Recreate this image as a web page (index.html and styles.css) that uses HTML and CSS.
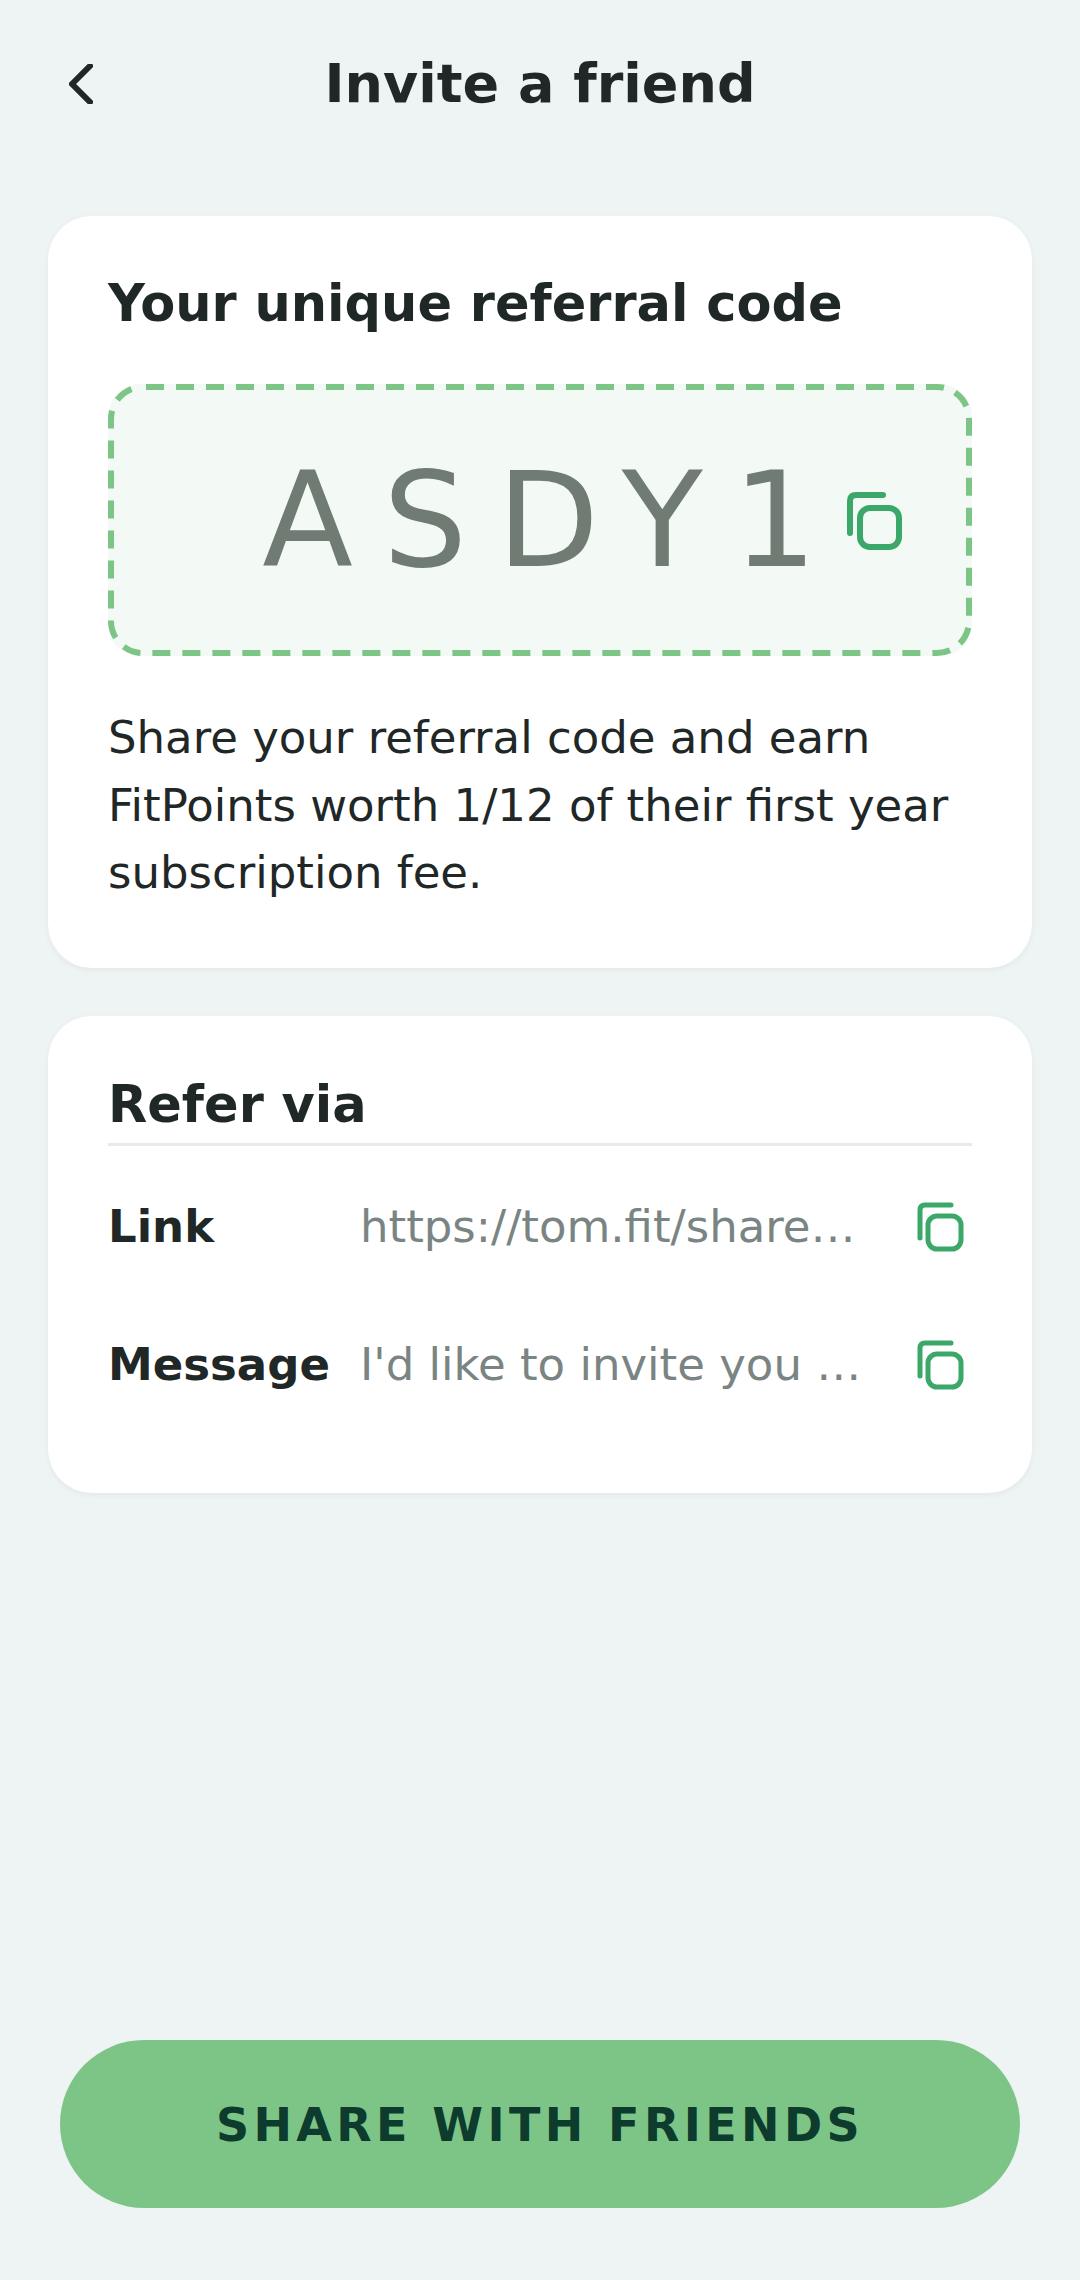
FILE: index.html
```html
<!DOCTYPE html>
<html lang="en">
<head>
<meta charset="utf-8">
<title>Invite a friend</title>
<link rel="stylesheet" href="styles.css">
</head>
<body>
<div class="screen">
  <header class="header">
    <svg class="back" viewBox="0 0 24 40" width="24" height="40"><path d="M21 2 L3 20 L21 38" fill="none" stroke="#1f2727" stroke-width="6" stroke-linecap="round" stroke-linejoin="round"/></svg>
    <h1 class="title">Invite a friend</h1>
  </header>
  <main class="content">
    <section class="card code-card">
      <h2 class="card-title">Your unique referral code</h2>
      <div class="code-box">
        <svg class="dash" viewBox="0 0 864 272" width="864" height="272"><rect x="3" y="3" width="858" height="266" rx="32" fill="none" stroke="#7dc586" stroke-width="6" stroke-dasharray="18 12" stroke-dashoffset="-3"/></svg>
        <span class="code">ASDY1</span>
        <svg class="copy-lg" viewBox="0 0 56 60"><path d="M3 41 V9 Q3 3 9 3 H36" fill="none" stroke="#3ba869" stroke-width="6" stroke-linecap="round"/><rect x="13" y="16" width="39" height="39" rx="10" fill="none" stroke="#3ba869" stroke-width="6"/></svg>
      </div>
      <p class="desc">Share your referral code and earn FitPoints worth 1/12 of their first year subscription fee.</p>
    </section>
    <section class="card refer-card">
      <h2 class="card-title refer-title">Refer via</h2>
      <div class="rows">
        <div class="row">
          <span class="label">Link</span>
          <span class="value">https://tom.fit/share…</span>
          <svg class="copy-sm" viewBox="0 0 48 50"><path d="M3 36 V8 Q3 3 8 3 H34" fill="none" stroke="#3ba869" stroke-width="5" stroke-linecap="round"/><rect x="11" y="14" width="33" height="33" rx="9" fill="none" stroke="#3ba869" stroke-width="5"/></svg>
        </div>
        <div class="row">
          <span class="label">Message</span>
          <span class="value">I'd like to invite you …</span>
          <svg class="copy-sm" viewBox="0 0 48 50"><path d="M3 36 V8 Q3 3 8 3 H34" fill="none" stroke="#3ba869" stroke-width="5" stroke-linecap="round"/><rect x="11" y="14" width="33" height="33" rx="9" fill="none" stroke="#3ba869" stroke-width="5"/></svg>
        </div>
      </div>
    </section>
  </main>
  <footer class="footer">
    <button class="share">SHARE WITH FRIENDS</button>
  </footer>
</div>
</body>
</html>
```
FILE: styles.css
```css
* { box-sizing: border-box; }
html, body { margin: 0; padding: 0; }
body { background: #eef4f3; font-family: "DejaVu Sans", sans-serif; color: #1f2727; }
.screen { width: 1080px; height: 2280px; display: flex; flex-direction: column; }
.header { height: 216px; padding: 0 48px 48px; display: flex; align-items: center; justify-content: center; position: relative; }
.back { position: absolute; left: 69px; top: 64px; }
.title { margin: 0; font-size: 54px; font-weight: 700; line-height: 66px; }
.content { flex: 1; padding: 0 48px; display: flex; flex-direction: column; gap: 48px; }
.card { background: #fff; border-radius: 44px; padding: 0 60px; box-shadow: 0 2px 6px rgba(0,0,0,0.05); }
.code-card { height: 752px; padding-top: 58px; }
.card-title { margin: 0; font-size: 51px; font-weight: 700; line-height: 60px; }
.code-box { position: relative; margin-top: 50px; height: 272px; border-radius: 32px; background: #f3f9f5; display: flex; align-items: center; justify-content: flex-end; padding: 0 69px 0 0; }
.dash { position: absolute; left: 0; top: 0; }
.code { font-size: 132.5px; letter-spacing: 30px; color: #707b74; line-height: 150px; }
.copy-lg { width: 56px; height: 60px; margin-top: 4px; }
.desc { margin: 48px 0 0; font-size: 45px; line-height: 67.5px; }
.refer-card { height: 477px; padding-top: 59px; }
.refer-title { height: 71px; border-bottom: 3px solid #e6eaea; }
.rows { padding-top: 12px; }
.row { display: grid; grid-template-columns: 252px 502px 1fr; align-items: center; height: 138px; }
.label { font-size: 45px; font-weight: 700; padding-bottom: 2px; }
.value { font-size: 45px; color: #7a8483; white-space: nowrap; padding-bottom: 2px; }
.copy-sm { width: 48px; height: 50px; margin-left: 55px; }
.footer { padding: 0 60px 72px; }
.share { display: block; width: 960px; height: 168px; padding: 2px 0 0; border: 0; border-radius: 84px; background: #7dc586; color: #0d3b2e; font-family: "DejaVu Sans", sans-serif; font-size: 46px; font-weight: 700; letter-spacing: 4.4px; }
```
